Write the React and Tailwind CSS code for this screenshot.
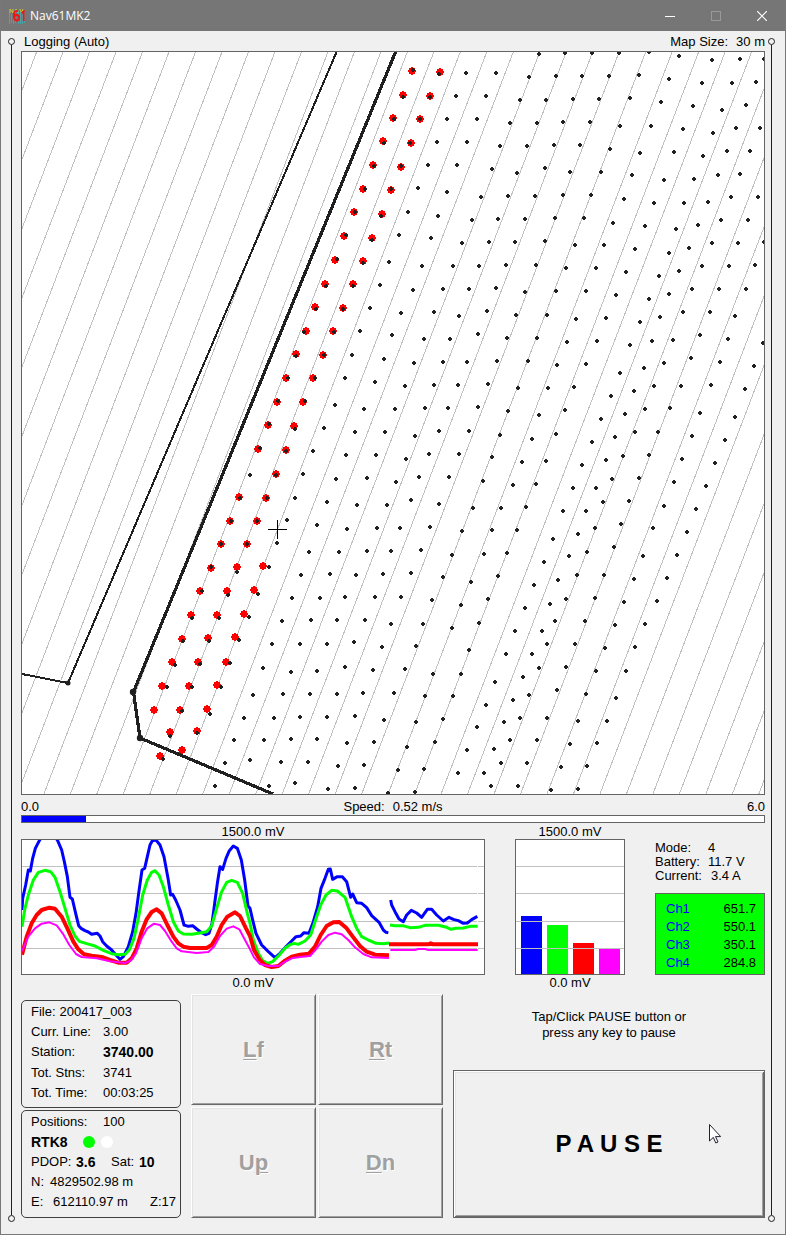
const parsePoints = (text) =>
  text
    .trim()
    .split(/\s+/)
    .map((pair) => pair.split(',').map(Number));

const stations = parsePoints(`
  539,54 565,53 592,53 619,53 649,52 679,56 712,60 740,59 764,59
  466,73 496,73 529,77 556,76 582,76 609,76 639,75 669,79 702,83 732,83 756,82
  456,96 486,96 520,100 546,100 573,99 599,99 630,98 661,102 693,106 722,110 746,105
  447,119 477,119 510,123 537,123 563,122 590,122 620,126 651,126 683,129 713,133 736,128 760,128
  437,142 467,142 500,146 527,146 554,145 580,145 610,149 640,153 674,152 703,156 727,151 750,151
  428,165 457,165 492,169 517,173 545,168 570,172 601,172 632,175 664,180 694,179 718,175 740,174
  418,188 447,192 481,197 508,196 535,196 563,195 591,195 624,199 654,203 684,203 708,202 731,197 758,197
  408,212 438,216 472,220 498,219 525,219 555,218 584,218 613,223 645,226 676,229 698,225 721,220 748,220
  399,235 431,238 462,243 489,242 515,242 545,241 575,245 604,245 635,249 669,253 689,248 712,243 738,243 764,242
  389,262 422,266 453,266 479,266 506,265 536,265 566,268 596,268 626,272 659,276 679,271 702,266 729,266 755,265
  380,285 413,290 443,289 469,289 496,288 525,292 556,291 586,291 616,295 649,299 669,294 692,289 719,289 746,289
  370,308 401,313 434,312 459,316 487,311 516,315 547,315 576,319 606,318 640,322 660,317 683,312 710,312 735,316
  360,331 392,335 424,339 450,339 478,334 507,338 537,338 567,342 597,341 630,345 652,341 673,340 700,335 728,339 763,343
  352,355 384,359 414,363 443,362 467,362 497,361 528,361 557,365 586,364 620,373 644,368 664,363 691,358 720,362 754,366
  345,378 375,382 405,386 434,385 458,385 488,384 518,388 548,388 574,387 611,396 634,391 654,386 681,386 711,385 745,389
  335,405 364,409 395,409 425,408 448,408 478,407 508,411 539,415 565,410 601,419 625,414 645,409 670,408 700,413 735,417
  324,428 355,432 385,432 415,436 439,431 469,431 500,435 532,439 556,434 592,442 615,437 635,432 658,432 692,436 725,440
  313,451 346,455 376,455 406,459 429,454 459,454 492,457 522,462 546,461 582,465 606,460 623,456 649,455 682,459 715,463
  250,475 303,474 336,479 367,478 396,482 419,477 449,477 483,481 513,485 536,484 573,488 596,488 612,479 639,478 674,482 706,486
  295,498 327,502 357,505 387,505 411,500 439,504 473,508 501,508 526,507 563,511 586,511 603,502 629,501 664,506 696,509
  287,520 317,525 347,529 377,528 400,528 430,527 462,531 492,530 517,530 553,539 578,534 595,528 621,524 653,528 687,532
  277,543 309,552 339,552 367,551 391,551 421,550 452,555 484,554 507,553 569,556 587,552 614,547 643,556 677,555
  269,567 301,575 330,574 356,575 383,574 411,573 443,577 471,582 498,576 544,562 534,585 558,580 577,575 604,575 634,579 667,578
  258,594 292,598 320,598 345,597 375,597 401,597 432,600 461,605 488,599 525,608 550,604 566,599 595,598 624,602 657,601
  249,617 282,621 311,620 337,620 365,620 391,624 423,624 452,628 479,623 515,631 542,631 555,621 585,621 615,625 645,624
  239,640 272,644 300,644 327,644 354,642 382,647 416,646 469,650 506,654 532,654 547,644 575,644 605,648 635,647
  230,663 263,668 291,672 317,671 345,667 373,670 405,669 433,674 461,674 495,682 523,677 539,668 566,667 596,671 626,671
  221,687 253,695 283,694 310,694 337,694 363,693 394,693 425,696 453,696 486,705 513,700 529,695 557,690 586,694 616,698
  210,714 244,718 274,718 300,717 327,717 355,716 384,720 416,722 443,719 477,727 504,722 520,718 547,718 578,721 607,721
  197,733 234,740 264,740 291,739 317,739 347,743 374,742 407,747 435,742 467,750 494,749 510,740 537,740 570,744 597,743
  225,763 250,760 281,762 308,762 338,766 364,765 398,770 424,769 458,773 484,773 501,763 527,763 561,767 587,766
  215,786 269,786 295,783 328,789 355,788 388,793 415,792 491,786 518,786 551,790 578,789
  413,70 439,74 403,97 430,97 394,119 420,119 384,143 410,143 374,166 401,166 365,189 391,189
  355,212 381,216 346,235 372,240 337,259 363,263 326,286 353,286 316,309 343,309 304,332 334,332
  296,356 324,355 288,378 315,378 278,401 305,401 269,424 295,429 260,448 286,451 276,475
  240,498 267,498 231,521 257,521 221,544 247,544 211,567 237,572 202,591 228,595 192,618 219,618
  183,641 209,641 175,665 200,664 167,687 192,687 182,711 170,736 163,759
`);

const logged = parsePoints(`
  412,71 440,72 403,95 430,96 393,118 420,119 383,141 411,143 373,165 401,167 363,189 391,190
  354,212 382,214 344,236 372,238 335,260 363,261 325,284 353,284 315,307 343,308 306,331 333,331
  296,354 323,355 286,378 313,378 277,402 303,402 268,425 294,426 258,449 286,450 276,474
  239,497 266,498 230,521 257,521 221,544 247,544 211,568 237,567 263,566 200,591 227,591 254,590
  191,615 217,615 244,614 182,639 208,638 235,637 172,662 198,662 226,662 162,686 189,686 217,685
  154,710 180,710 207,709 170,732 197,731 160,756 182,750
`);

const stationMarks = stations.map(([x, y]) => `M${x - 1} ${y - 2}h2v1h1v2h-1v1h-2v-1h-1v-2h1z`).join('');

const loggedMarks = logged
  .map(([x, y]) => `M${x - 1} ${y - 4}h2v1h2v2h1v2h-1v2h-2v1h-2v-1h-2v-2h-1v-2h1v-2h2z`)
  .join('');

const surveyLines = Array.from({ length: 39 }, (_, i) => 36.6 + i * 26.48);

const traces = [
  {
    color: '#0000ff',
    width: 9,
    runs: [
      '36,270 38,235 47,195 55,150 61,153 68,115 76,85 88,62 95,50 115,35 135,50 143,62 155,90 163,125 172,170 180,232 187,237 197,280 206,317 213,325 225,332 235,336 245,343 262,340 270,348 278,365 290,378 305,390 318,405 330,418 340,410 355,380 368,335 378,280 386,220 396,150 404,145 412,110 420,75 427,62 438,60 450,75 462,110 474,175 482,225 488,223 497,240 510,270 522,315 535,319 548,317 560,327 575,338 587,344 597,340 606,310 614,250 622,190 630,140 638,148 648,115 658,92 670,78 682,85 694,120 704,180 714,258 720,265 728,300 738,340 755,375 775,395 795,413 810,400 830,378 845,363 858,350 872,348 882,338 897,340 910,305 923,260 933,205 945,175 955,148 961,147 968,178 982,170 997,170 1010,185 1022,232 1028,222 1040,248 1055,250 1070,263 1085,287 1108,308 1120,330 1128,337 1135,338',
      '1142,240 1145,255 1155,275 1167,297 1180,305 1190,285 1204,271 1220,279 1235,292 1252,268 1265,268 1280,285 1300,303 1317,292 1330,298 1345,302 1360,310 1372,309 1385,299 1402,289'
    ]
  },
  {
    color: '#00ff00',
    width: 9,
    runs: [
      '36,320 45,265 55,225 70,180 85,157 105,151 122,155 135,172 150,215 165,265 180,315 195,348 208,364 230,371 255,378 280,391 305,401 325,404 345,403 358,390 372,355 385,295 398,225 412,180 425,157 435,152 447,165 460,200 475,255 490,305 505,333 520,342 545,343 565,340 590,335 605,318 620,265 635,215 650,187 665,181 682,187 698,220 712,280 720,310 730,360 745,400 758,422 772,430 788,425 808,405 825,385 840,374 853,370 865,373 885,363 902,345 915,305 932,255 948,225 965,211 982,213 1005,232 1025,290 1040,325 1055,350 1075,360 1098,370 1120,371 1137,369',
      '1140,315 1155,317 1178,317 1200,323 1225,322 1245,316 1285,316 1310,322 1323,328 1338,325 1360,324 1380,319 1403,319'
    ]
  },
  {
    color: '#ff0000',
    width: 12,
    runs: [
      '36,404 50,350 65,310 80,285 95,270 118,263 135,266 155,290 172,325 190,365 205,388 222,403 245,407 275,411 300,420 325,428 350,428 365,415 380,385 395,335 410,298 425,276 440,268 455,280 472,315 490,350 505,370 520,380 540,384 590,384 605,375 620,350 635,315 652,290 675,277 690,288 708,325 720,348 732,390 748,418 765,435 785,441 805,438 825,422 845,410 870,404 897,401 915,380 932,345 950,318 970,307 988,306 1010,325 1030,352 1050,378 1070,395 1095,404 1137,406',
      '1137,373 1255,373 1262,370 1270,373 1404,373'
    ]
  },
  {
    color: '#ff00ff',
    width: 6,
    runs: [
      '36,393 55,350 75,325 95,311 118,307 140,316 158,340 178,375 198,402 215,411 260,415 300,424 345,429 362,422 378,400 395,355 412,325 432,311 450,315 465,333 485,365 500,385 515,394 560,399 595,396 612,380 630,348 650,326 670,319 688,328 705,360 720,388 732,412 750,432 775,438 805,438 825,425 845,415 870,411 900,408 918,388 935,365 955,345 975,338 995,343 1015,360 1035,382 1060,402 1085,412 1137,414',
      '1141,390 1215,390 1225,387 1245,387 1255,390 1403,390'
    ]
  }
];

const channels = [
  { name: 'Ch1', value: 651.7, color: '#0000ff' },
  { name: 'Ch2', value: 550.1, color: '#00ff00' },
  { name: 'Ch3', value: 350.1, color: '#ff0000' },
  { name: 'Ch4', value: 284.8, color: '#ff00ff' }
];

const gridRows = [139.5, 220.5, 304.5, 385.5];

const TitleBar = () => (
  <header className="flex h-[31px] items-center bg-[#767676] pl-2 font-['Open_Sans','Noto_Sans',sans-serif] text-xs text-white">
    <svg viewBox="0 0 16 16" className="mr-[5px] h-4 w-4" aria-hidden="true">
      <path d="M.5 5v11M2.5 6v9M9.500 2v14M11.500 4v12M13.500 5v11M15.500 4v11M4.500 11v5M6.500 12v3" stroke="#4fa3a5" />
      <path d="M1 1v4M1 1l3 4V1M6 5l1-4 2 4M11 1l1.500 4L14 1" stroke="#c8c83c" fill="none" />
      <path d="M9 3.500C6.500 2 4.800 4 4.800 7.500s1.200 5 2.800 5 2.600-1.200 2.600-2.800-1-2.700-2.500-2.700S5 8 5 9.500M12.500 5l2.200-1.500V13" stroke="#f01414" strokeWidth="1.800" fill="none" />
    </svg>
    <h1 className="flex-1">Nav61MK2</h1>
    <button type="button" aria-label="Minimize" className="flex h-full w-[46px] items-center justify-center">
      <svg viewBox="0 0 10 10" className="h-[10px] w-[10px]" stroke="#fff" shapeRendering="crispEdges"><path d="M0 5.500h10" /></svg>
    </button>
    <button type="button" aria-label="Maximize" disabled className="flex h-full w-[46px] items-center justify-center">
      <svg viewBox="0 0 10 10" className="h-[10px] w-[10px]" stroke="#9a9a9a" fill="none" shapeRendering="crispEdges"><path d="M.5.5h9v9h-9z" /></svg>
    </button>
    <button type="button" aria-label="Close" className="flex h-full w-[46px] items-center justify-center">
      <svg viewBox="0 0 10 10" className="h-[10px] w-[10px]" stroke="#fff" strokeWidth="1.200"><path d="M0 0l10 10M10 0L0 10" /></svg>
    </button>
  </header>
);

const Rail = () => (
  <div className="flex flex-col items-center" aria-hidden="true">
    <span className="h-[7px] w-[7px] rounded-full border border-[#202020]" />
    <span className="w-px flex-1 bg-[#202020]" />
    <span className="h-[7px] w-[7px] rounded-full border border-[#202020]" />
  </div>
);

const SurveyMap = () => (
  <svg viewBox="22 52 742 742" className="block w-full border border-[#646464] bg-white" role="img" aria-label="Survey map">
    <g stroke="#c0c0c0" shapeRendering="crispEdges">
      {surveyLines.map((x) => (
        <line key={x} x1={x} y1="52" x2={x - 284} y2="794" />
      ))}
    </g>
    <g stroke="#202020" fill="none" shapeRendering="crispEdges">
      <polyline points="22,674 68,683 336.500,52" strokeWidth="2" />
      <polyline points="395.500,52 133.500,692 140,738 273,794" strokeWidth="3.200" />
    </g>
    <g fill="#202020">
      <circle cx="68" cy="683" r="2.500" />
      <circle cx="133" cy="692" r="3.200" />
      <circle cx="140" cy="738" r="3.200" />
    </g>
    <path d={loggedMarks} fill="#ff0000" />
    <path d={stationMarks} fill="#202020" />
    <path d="M268 529.500h19M277.500 520v19" stroke="#000" shapeRendering="crispEdges" />
  </svg>
);

const SignalChart = () => (
  <svg viewBox="36 60 1386 402" className="block w-full border border-[#646464] bg-white" role="img" aria-label="Channel history">
    {gridRows.map((y) => (
      <path key={y} d={`M36 ${y}H1422`} stroke="#c0c0c0" strokeWidth="3" />
    ))}
    <path d="M1402.500 60V462" stroke="#fff" strokeWidth="3" />
    {traces.map((trace) => (
      <g key={trace.color} stroke={trace.color} strokeWidth={trace.width} fill="none" strokeLinejoin="round">
        {trace.runs.map((points) => (
          <polyline key={points} points={points} />
        ))}
      </g>
    ))}
  </svg>
);

const ChannelBars = () => (
  <div className="relative h-[136px] border border-[#646464] bg-white">
    <div className="flex h-full items-end gap-[5px] pl-[5px]">
      {channels.map(({ name, value, color }) => (
        <div key={name} className="w-[21px]" style={{ height: `${(value / 1500) * 100}%`, backgroundColor: color }} />
      ))}
    </div>
    <div className="absolute inset-0 grid grid-rows-[27px_27px_28px_27px_1fr]">
      <span className="border-b border-[#c0c0c0]" />
      <span className="border-b border-[#c0c0c0]" />
      <span className="border-b border-[#c0c0c0]" />
      <span className="border-b border-[#c0c0c0]" />
    </div>
  </div>
);

const Field = ({ label, children }) => (
  <div className="flex">
    <dt className="w-[72px]">{label}</dt>
    <dd>{children}</dd>
  </div>
);

const PadButton = ({ children }) => (
  <button
    type="button"
    disabled
    className="h-[111px] border border-t-white border-r-[#696969] border-b-[#696969] border-l-white text-[22px] font-bold text-[#a0a0a0] underline-offset-2 shadow-[inset_1px_1px_0_#e3e3e3,inset_-1px_-1px_0_#a0a0a0] [text-shadow:1px_1px_0_#fff]"
  >
    {children}
  </button>
);

const underline = 'underline decoration-1';

export default function App() {
  return (
    <div className="border border-t-0 border-[#787878] bg-[#f0f0f0] font-['Liberation_Sans',Arial,sans-serif] text-[13px] text-black">
      <TitleBar />
      <div className="grid grid-cols-[20px_minmax(0,1fr)_20px] pb-3">
        <div className="grid justify-center pt-[7px]">
          <Rail />
        </div>
        <main className="pb-1">
          <div className="flex h-5 items-center justify-between pt-px pl-[3px]">
            <span>Logging (Auto)</span>
            <span className="flex gap-2">
              <span>Map Size:</span>
              <span>30 m</span>
            </span>
          </div>
          <SurveyMap />
          <div className="grid h-5 grid-cols-3 items-center pt-0.5">
            <span>0.0</span>
            <span className="flex justify-center gap-2">
              <span>Speed:</span>
              <span>0.52 m/s</span>
            </span>
            <span className="text-right">6.0</span>
          </div>
          <div className="h-2 border border-[#646464] bg-white">
            <div className="h-full bg-[#0000ff]" style={{ width: `${(0.52 / 6) * 100}%` }} />
          </div>

          <section className="grid grid-cols-[minmax(0,1fr)_110px_110px] gap-x-[30px]">
            <div className="text-center leading-4">
              <p className="pt-0.5 leading-[14px]">1500.0 mV</p>
              <SignalChart />
              <p>0.0 mV</p>
            </div>
            <div className="text-center leading-4">
              <p className="pt-0.5 leading-[14px]">1500.0 mV</p>
              <ChannelBars />
              <p>0.0 mV</p>
            </div>
            <div className="flex flex-col justify-between pt-[18px] pb-4">
              <dl className="grid grid-cols-[53px_1fr] leading-[14px]">
                <dt>Mode:</dt>
                <dd>4</dd>
                <dt>Battery:</dt>
                <dd>11.7 V</dd>
                <dt>Current:</dt>
                <dd className="pl-[3px]">3.4 A</dd>
              </dl>
              <table className="h-[82px] w-full border-separate border-spacing-x-2 border-spacing-y-0 border border-[#646464] bg-[#00ff00] pt-1.5 pb-0.5 leading-[18px]">
                <tbody>
                  {channels.map(({ name, value }) => (
                    <tr key={name}>
                      <th scope="row" className="pl-0.5 text-left font-normal text-[#0000ff]">{name}</th>
                      <td className="text-right">{value.toFixed(1)}</td>
                    </tr>
                  ))}
                </tbody>
              </table>
            </div>
          </section>

          <section className="grid grid-cols-[160px_252px_minmax(0,1fr)] items-end gap-x-[10px] pt-[3px]">
            <div className="grid gap-0.5 leading-5">
              <dl className="h-[108px] rounded-[5px] border border-[#404040] px-[9px] pt-px">
                <div className="flex gap-1">
                  <dt>File:</dt>
                  <dd>200417_003</dd>
                </div>
                <Field label="Curr. Line:">3.00</Field>
                <Field label="Station:"><b className="text-sm leading-5">3740.00</b></Field>
                <Field label="Tot. Stns:">3741</Field>
                <Field label="Tot. Time:">00:03:25</Field>
              </dl>
              <div className="h-[108px] rounded-[5px] border border-[#404040] pt-px pr-1 pl-[9px]">
                <p className="flex"><span className="w-[72px]">Positions:</span>100</p>
                <p className="flex items-center">
                  <b className="w-[52px] text-sm leading-5">RTK8</b>
                  <span className="mr-1.5 h-3 w-3 rounded-full bg-[#00ff00]" />
                  <span className="h-3 w-3 rounded-full bg-white" />
                </p>
                <p className="flex">
                  <span className="w-[45px]">PDOP:</span>
                  <b className="w-[35px] text-sm leading-5">3.6</b>
                  <span className="w-7">Sat:</span>
                  <b className="text-sm leading-5">10</b>
                </p>
                <p className="flex"><span className="w-[19px]">N:</span>4829502.98 m</p>
                <p className="flex">
                  <span className="w-[22px]">E:</span>
                  <span className="flex-1">612110.97 m</span>
                  <span>Z:17</span>
                </p>
              </div>
            </div>

            <div className="grid grid-cols-2 gap-0.5">
              <PadButton><span className={underline}>L</span>f</PadButton>
              <PadButton><span className={underline}>R</span>t</PadButton>
              <PadButton>U<span className={underline}>p</span></PadButton>
              <PadButton><span className={underline}>D</span>n</PadButton>
            </div>

            <div>
              <p className="pb-[29px] text-center leading-4">
                Tap/Click PAUSE button or
                <br />
                press any key to pause
              </p>
              <button
                type="button"
                className="relative h-[148px] w-full border border-[#646464] text-2xl font-bold shadow-[inset_1px_1px_0_#fff,inset_-1px_-1px_0_#696969,inset_2px_2px_0_#e3e3e3,inset_-2px_-2px_0_#a0a0a0]"
              >
                P A U S E
                <svg viewBox="0 0 12 20" className="absolute top-[53px] right-[43px] h-5 w-3" aria-hidden="true">
                  <path d="M.5.5v16.500l3.800-3.600 2.500 5.600 2.200-1-2.500-5.400h5.200z" fill="#fff" stroke="#202030" />
                </svg>
              </button>
            </div>
          </section>
        </main>
        <div className="flex pt-[7px] pl-[3px]">
          <Rail />
        </div>
      </div>
    </div>
  );
}
